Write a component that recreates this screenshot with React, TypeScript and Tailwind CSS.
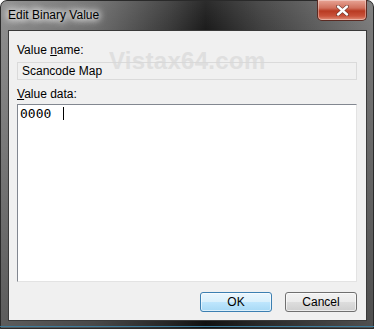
import React from "react";

export default function App() {
  return (
    <div
      className="relative w-[374px] h-[329px] overflow-hidden rounded-t-[7px] flex flex-col"
      style={{ fontFamily: '"Liberation Sans", Arial, sans-serif' }}
    >
      {/* frame background */}
      <div className="absolute inset-0 bg-[linear-gradient(90deg,#8c8c8c_0%,#6e6e6e_25%,#3a3a3a_45%,#1a1a1a_55%,#3f3f3f_70%,#7a7a7a_100%)]" />
      <div className="absolute inset-0 bg-[linear-gradient(180deg,rgba(255,255,255,0.08)_0%,rgba(0,0,0,0)_10%,rgba(0,0,0,0.35)_100%)]" />
      <div className="absolute inset-0 rounded-t-[7px] border border-[#2a2a2a]" />
      <div className="absolute left-0 right-0 bottom-[2px] h-[1px] bg-[#3d7c9c]" />

      {/* title bar */}
      <div className="relative h-[30px] flex items-start">
        <div className="pl-[8px] pt-[6px] text-[12px] text-black [text-shadow:0_0_6px_#fff,0_0_8px_#fff,0_0_10px_#fff]">
          Edit Binary Value
        </div>
        <div className="absolute left-[317px] top-0 w-[50px] h-[21px] rounded-b-[5px] border border-t-0 border-[#5a2a22] bg-[linear-gradient(180deg,#e8a596_0%,#d0705c_40%,#b83a22_55%,#c9523a_80%,#e0907a_100%)] flex items-center justify-center shadow-[inset_0_0_0_1px_rgba(255,255,255,0.35)]">
          <svg width="13" height="11" viewBox="0 0 13 11">
            <path d="M2 1.5 L11 9.5 M11 1.5 L2 9.5" stroke="#5a2a22" strokeWidth="3.6" strokeLinecap="round" />
            <path d="M2 1.5 L11 9.5 M11 1.5 L2 9.5" stroke="#ffffff" strokeWidth="2.4" strokeLinecap="round" />
          </svg>
        </div>
      </div>

      {/* client area */}
      <div className="relative ml-[8px] w-[359px] h-[291px] border border-[#3a3a3a] bg-[#f0f0f0] flex flex-col px-[8px] text-[12px] text-black">
        <div className="relative mt-[12px] h-[15px] leading-[15px]">
          Value <span className="underline">n</span>ame:
        </div>
        <div className="relative mt-[4px] h-[18px] w-[340px] border border-[#dadada] bg-[#f0f0f0] pl-[4px] leading-[16px]">
          Scancode Map
        </div>
        <div className="relative mt-[7px] h-[15px] leading-[15px]">
          <span className="underline">V</span>alue data:
        </div>
        <div className="relative mt-[2px] h-[178px] w-[340px] border border-[#828790] border-r-[#e3e3e3] border-b-[#e3e3e3] bg-white flex items-start pl-[2px] pt-[1px]">
          <span className="text-[13px] leading-[15px]" style={{ fontFamily: '"DejaVu Sans Mono", "Liberation Mono", monospace' }}>
            0000
          </span>
          <span className="ml-[12px] mt-[1px] w-[1px] h-[13px] bg-black" />
        </div>
        <div className="relative mt-[10px] flex justify-end gap-[13px] pr-[1px]">
          <button className="w-[72px] h-[20px] rounded-[3px] border border-[#3c7fb1] bg-[linear-gradient(180deg,#eaf6fd_0%,#d9f0fc_50%,#bee6fd_51%,#a7d9f5_100%)] shadow-[inset_0_0_0_1px_rgba(255,255,255,0.6)] text-[12px] leading-[18px] text-black">
            OK
          </button>
          <button className="w-[72px] h-[20px] rounded-[3px] border border-[#707070] bg-[linear-gradient(180deg,#f2f2f2_0%,#ebebeb_50%,#dddddd_51%,#cfcfcf_100%)] shadow-[inset_0_0_0_1px_rgba(255,255,255,0.6)] text-[12px] leading-[18px] text-black">
            Cancel
          </button>
        </div>
        {/* watermark */}
        <div className="absolute left-[100px] top-[12px] z-10 pointer-events-none text-[24px] font-bold text-[#d8d8d8] opacity-70 tracking-[0.3px]">
          Vistax64.com
        </div>
      </div>
    </div>
  );
}
